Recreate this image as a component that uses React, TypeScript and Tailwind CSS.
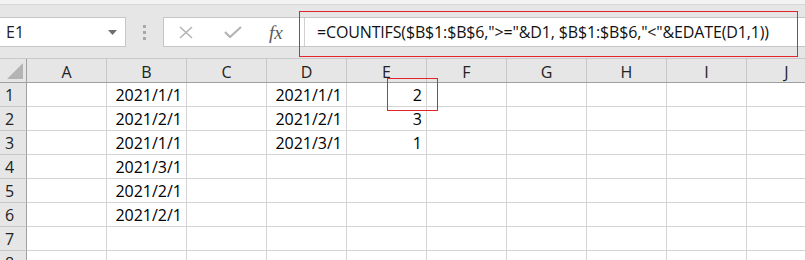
import React from 'react'

const cols = ['A', 'B', 'C', 'D', 'E', 'F', 'G', 'H', 'I', 'J']

// sheet content: row -> col -> text
const data: Record<number, Record<string, string>> = {
  1: { B: '2021/1/1', D: '2021/1/1', E: '2' },
  2: { B: '2021/2/1', D: '2021/2/1', E: '3' },
  3: { B: '2021/1/1', D: '2021/3/1', E: '1' },
  4: { B: '2021/3/1' },
  5: { B: '2021/2/1' },
  6: { B: '2021/2/1' },
  7: {},
  8: {},
}

const font = { fontFamily: '"Open Sans", "Noto Sans", sans-serif' }

function FormulaBar() {
  return (
    <div className="flex h-[53px] items-start bg-[#e6e6e6] pt-[12px]">
      {/* name box: x 0..125 */}
      <div className="flex h-[30px] w-[126px] items-center justify-between border border-l-0 border-[#c6c6c6] bg-white pl-[6px] pr-[8px]">
        <span className="text-[16px] text-[#222]">E1</span>
        <svg width="9" height="5" viewBox="0 0 9 5">
          <path d="M0 0H9L4.5 5Z" fill="#6e6e6e" />
        </svg>
      </div>
      {/* grip dots */}
      <div className="flex w-[37px] flex-col items-center gap-[3px] pt-[8px]">
        <span className="h-[3px] w-[3px] bg-[#a8a8a8]" />
        <span className="h-[3px] w-[3px] bg-[#a8a8a8]" />
        <span className="h-[3px] w-[3px] bg-[#a8a8a8]" />
      </div>
      {/* formula box */}
      <div className="flex h-[30px] flex-1 border border-r-0 border-[#c6c6c6] bg-white">
        <div className="flex w-[140px] items-center">
          <svg className="ml-[15px]" width="14" height="13" viewBox="0 0 14 13">
            <path d="M1 1L13 12M13 1L1 12" stroke="#b4b4b4" strokeWidth="1.6" fill="none" />
          </svg>
          <svg className="ml-[31px]" width="18" height="12" viewBox="0 0 18 12">
            <path d="M1 6L6 11L17 1" stroke="#b4b4b4" strokeWidth="2.2" fill="none" />
          </svg>
          <span
            className="ml-[27px] text-[19px] italic leading-none text-[#5a5a5a]"
            style={{ fontFamily: '"Liberation Serif", serif' }}
          >
            fx
          </span>
        </div>
        <div className="flex flex-1 items-center border-l border-[#d0d0d0] pl-[12px]">
          <span className="whitespace-nowrap text-[16px] tracking-[-0.15px] text-[#111]">
            =COUNTIFS($B$1:$B$6,"&gt;="&amp;D1, $B$1:$B$6,"&lt;"&amp;EDATE(D1,1))
          </span>
        </div>
      </div>
    </div>
  )
}

function Sheet() {
  return (
    <div className="flex flex-col">
      {/* column headers */}
      <div className="flex h-[25px] border-y border-[#c9c9c9] border-b-[#a0a0a0] bg-[#e6e6e6]">
        <div className="relative w-[27px] shrink-0 border-r border-[#a0a0a0]">
          <svg className="absolute bottom-[3px] left-[7px]" width="16" height="16" viewBox="0 0 16 16">
            <path d="M0 16L16 0V16Z" fill="#b4b4b4" />
          </svg>
        </div>
        {cols.map((c) => (
          <div
            key={c}
            className="flex w-[80px] shrink-0 items-center justify-center border-r border-[#c6c6c6] pt-[2px] text-[16px] text-[#222]"
          >
            {c}
          </div>
        ))}
      </div>
      {Object.entries(data).map(([r, row]) => (
        <div key={r} className="flex h-[24px]">
          <div className="flex w-[27px] shrink-0 items-center border-b border-r border-[#c6c6c6] border-r-[#a0a0a0] bg-[#e6e6e6] pl-[5px] text-[16px] text-[#222]">
            {r}
          </div>
          {cols.map((c) => (
            <div
              key={c}
              className="flex w-[80px] shrink-0 items-center justify-end border-b border-r border-[#d4d4d4] pr-[4px] text-[16px] text-black"
            >
              {row[c] ?? ''}
            </div>
          ))}
        </div>
      ))}
    </div>
  )
}

export default function App() {
  return (
    <div className="relative h-[260px] w-[805px] overflow-hidden bg-white" style={font}>
      <div className="h-[5px] border-b border-[#d6d6d6] bg-[#f3f3f3]" />
      <FormulaBar />
      <Sheet />
      {/* red annotation boxes */}
      <div className="absolute left-[299px] top-[11px] h-[46px] w-[499px] border border-[#e3242b]" />
      <div className="absolute left-[387px] top-[78px] h-[33px] w-[51px] border border-[#e3242b]" />
    </div>
  )
}
